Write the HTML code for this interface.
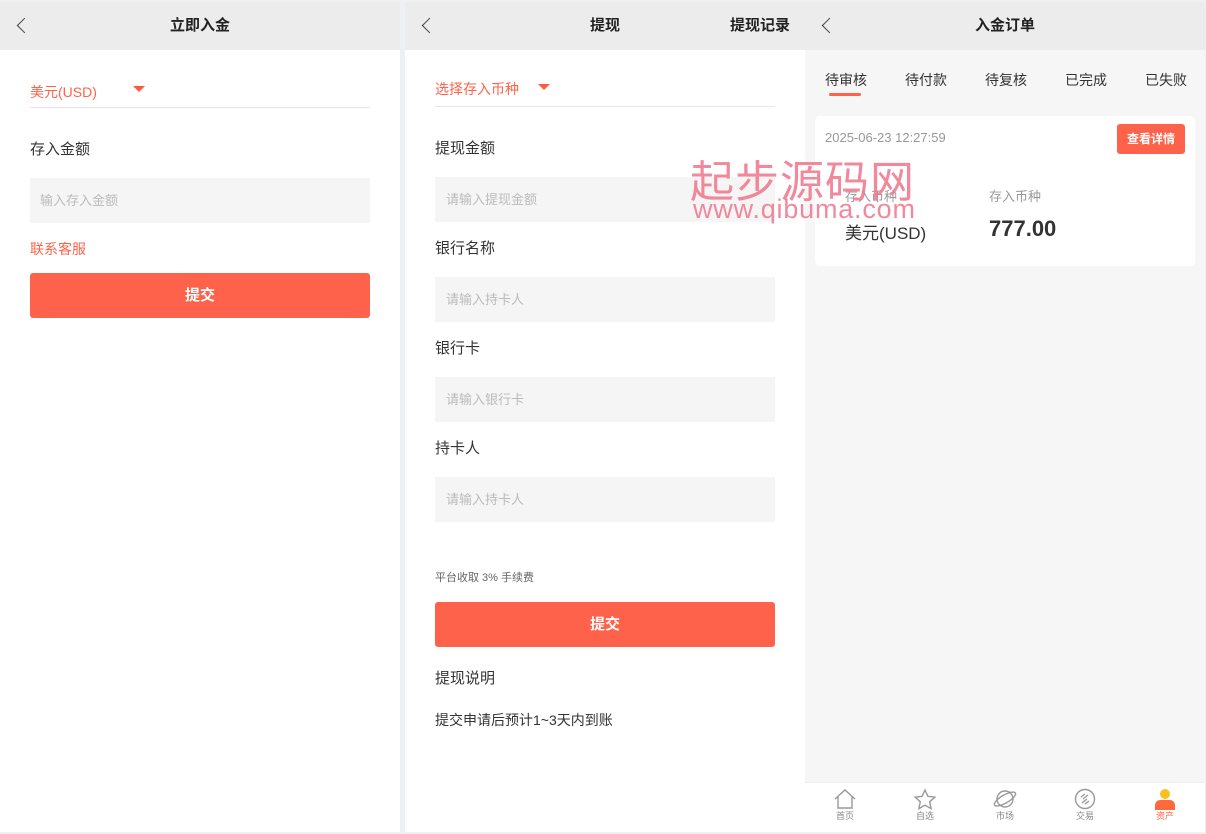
<!DOCTYPE html>
<html><head><meta charset="utf-8"><style>
*{margin:0;padding:0;box-sizing:border-box}
body{width:1206px;height:834px;background:#eef0f3;font-family:"Liberation Sans","Noto Sans CJK SC",sans-serif;position:relative;overflow:hidden;color:#333}
.p{position:absolute;top:2px;height:830px;background:#fff}
.hd{height:48px;background:#ececec;position:relative;text-align:center;line-height:48px;font-size:15px;font-weight:bold;color:#222}
.bk{position:absolute;left:19px;top:18px;width:11px;height:11px;border-left:1.5px solid #444;border-bottom:1.5px solid #444;transform:rotate(45deg)}
.abs{position:absolute}
.lbl{font-size:15px;color:#333}
.inp{position:absolute;left:30px;width:340px;height:45px;background:#f5f5f5;font-size:13px;color:#bbb;padding-left:11px;line-height:45px}
.btn{position:absolute;left:30px;width:340px;height:45px;background:#ff624b;border-radius:3px;color:#fff;text-align:center;line-height:45px;font-size:15px;font-weight:bold}
.tri{position:absolute;width:0;height:0;border-left:6px solid transparent;border-right:6px solid transparent;border-top:6px solid #ff5a3d}
.line{position:absolute;left:30px;width:340px;height:1px;background:#e6e6e6}
.tab{position:absolute;top:70px;font-size:14px;color:#333}
.nav{position:absolute;top:5px;width:80px;text-align:center;font-size:9px;color:#888;line-height:11px}
.nav svg{display:block;margin:0 auto 1px}
</style></head><body>
<div class="p" style="left:0;width:400px">
 <div class="hd"><div class="bk"></div>立即入金</div>
 <div class="abs" style="left:30px;top:80px;font-size:14px;color:#ff624b">美元(USD)</div>
 <div class="tri" style="left:133px;top:84px"></div>
 <div class="line" style="top:105px"></div>
 <div class="abs lbl" style="left:30px;top:136px">存入金额</div>
 <div class="inp" style="top:176px;padding-left:10px">输入存入金额</div>
 <div class="abs" style="left:30px;top:237px;font-size:14px;color:#ff624b">联系客服</div>
 <div class="btn" style="top:271px">提交</div>
</div>
<div class="p" style="left:405px;width:400px">
 <div class="hd"><div class="bk"></div>提现<span style="position:absolute;right:15px;top:0">提现记录</span></div>
 <div class="abs" style="left:30px;top:77px;font-size:14px;color:#ff624b">选择存入币种</div>
 <div class="tri" style="left:133px;top:82px"></div>
 <div class="line" style="top:104px"></div>
 <div class="abs lbl" style="left:30px;top:135px">提现金额</div>
 <div class="inp" style="top:175px">请输入提现金额</div>
 <div class="abs lbl" style="left:30px;top:235px">银行名称</div>
 <div class="inp" style="top:275px">请输入持卡人</div>
 <div class="abs lbl" style="left:30px;top:335px">银行卡</div>
 <div class="inp" style="top:375px">请输入银行卡</div>
 <div class="abs lbl" style="left:30px;top:435px">持卡人</div>
 <div class="inp" style="top:475px">请输入持卡人</div>
 <div class="abs" style="left:30px;top:567px;font-size:11px;color:#666">平台收取 3% 手续费</div>
 <div class="btn" style="top:600px">提交</div>
 <div class="abs lbl" style="left:30px;top:665px">提现说明</div>
 <div class="abs" style="left:30px;top:708px;font-size:14px;color:#333">提交申请后预计1~3天内到账</div>
</div>
<div class="p" style="left:805px;width:400px;background:#f6f6f6">
 <div class="hd"><div class="bk"></div>入金订单</div>
 <div class="tab" style="left:20px;top:68px">待审核</div>
 <div class="abs" style="left:24px;top:91px;width:32px;height:3px;background:#ff624b;border-radius:2px"></div>
 <div class="tab" style="left:100px;top:68px">待付款</div>
 <div class="tab" style="left:180px;top:68px">待复核</div>
 <div class="tab" style="left:260px;top:68px">已完成</div>
 <div class="tab" style="left:340px;top:68px">已失败</div>
 <div class="abs" style="left:10px;top:114px;width:380px;height:150px;background:#fff;border-radius:5px">
  <div class="abs" style="left:10px;top:14px;font-size:13px;color:#999">2025-06-23 12:27:59</div>
  <div class="abs" style="right:10px;top:8px;width:68px;height:30px;background:#ff624b;border-radius:3px;color:#fff;font-size:12px;font-weight:bold;text-align:center;line-height:30px">查看详情</div>
  <div class="abs" style="left:30px;top:70px;font-size:13px;color:#999">存入币种</div>
  <div class="abs" style="left:174px;top:70px;font-size:13px;color:#999">存入币种</div>
  <div class="abs" style="left:30px;top:103px;font-size:17px;color:#333">美元(USD)</div>
  <div class="abs" style="left:174px;top:100px;font-size:22px;font-weight:bold;color:#333">777.00</div>
 </div>
 <div class="abs" style="left:0;bottom:0;width:400px;height:50px;background:#fff;border-top:1px solid #eee">
  <div class="nav" style="left:0"><svg width="24" height="22" viewBox="0 0 24 22"><path d="M2 11L12 2l10 9M5 9v11h14V9" fill="none" stroke="#999" stroke-width="1.4"/></svg><div>首页</div></div>
  <div class="nav" style="left:80px"><svg width="24" height="22" viewBox="0 0 24 22"><path d="M12 2l2.9 6.3 6.9.8-5.1 4.7 1.4 6.8L12 17.2l-6.1 3.4 1.4-6.8L2.2 9.1l6.9-.8z" fill="none" stroke="#999" stroke-width="1.4"/></svg><div>自选</div></div>
  <div class="nav" style="left:160px"><svg width="24" height="22" viewBox="0 0 24 22"><circle cx="12" cy="11" r="8" fill="none" stroke="#999" stroke-width="1.4"/><ellipse cx="12" cy="11" rx="12" ry="4" transform="rotate(-30 12 11)" fill="none" stroke="#999" stroke-width="1.4"/></svg><div>市场</div></div>
  <div class="nav" style="left:240px"><svg width="24" height="22" viewBox="0 0 24 22"><circle cx="12" cy="11" r="9.5" fill="none" stroke="#999" stroke-width="1.4"/><path d="M8 9l4-3M10 11l5-4M9 15l5-4M12 16l4-3" stroke="#999" stroke-width="1.4"/></svg><div>交易</div></div>
  <div class="nav" style="left:320px;color:#ff624b"><svg width="24" height="22" viewBox="0 0 24 22"><circle cx="12" cy="6" r="5" fill="#fcbf1e"/><path d="M2 22v-5a5 5 0 0 1 5-5h10a5 5 0 0 1 5 5v5z" fill="#ff6a3d"/></svg><div>资产</div></div>
 </div>
</div>
<div class="abs" style="left:690px;top:146px;font-size:44px;color:#f07c92;letter-spacing:1px;opacity:.9">起步源码网</div>
<div class="abs" style="left:693px;top:194px;font-size:27px;color:#f07c92;letter-spacing:0.8px;opacity:.9">www.qibuma.com</div>
</body></html>
